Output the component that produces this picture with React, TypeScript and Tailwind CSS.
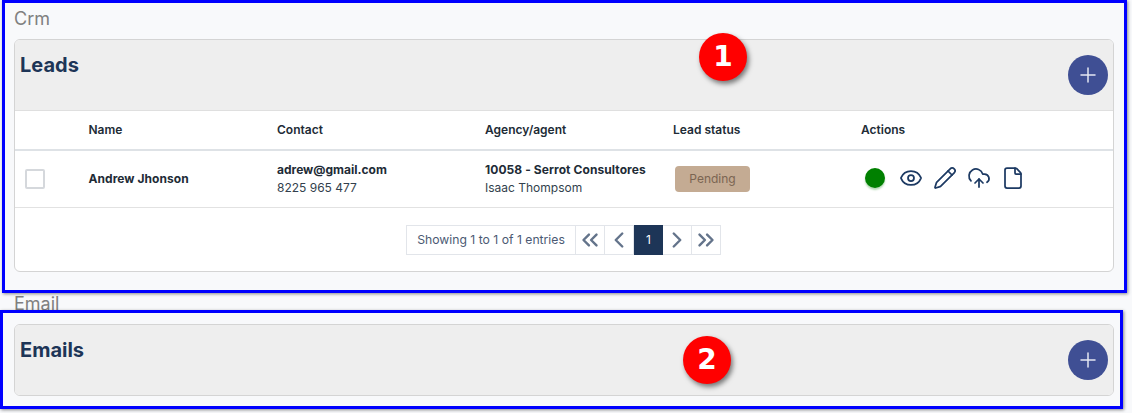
import { ChevronLeft, ChevronRight, ChevronsLeft, ChevronsRight, CloudUpload, Eye, File, Pencil, Plus } from 'lucide-react';

const rowGrid = 'grid grid-cols-[73.5px_188.5px_208px_188px_188px_1fr] items-center';

function CardHeading({ title }: { title: string }) {
  return (
    <div className="relative h-[70px] bg-[#eeeeee] pl-[5px] pt-[11px]">
      <h2 className="text-[20px] leading-[28px] font-bold text-[#1d3557]">{title}</h2>
      <button className="absolute right-[5px] top-[15px] flex h-10 w-10 items-center justify-center rounded-full bg-[#3f4f94] text-[#e5e7f2]">
        <Plus size={24} strokeWidth={1.5} />
      </button>
    </div>
  );
}

function PageButton({ children, active }: { children: React.ReactNode; active?: boolean }) {
  return (
    <div
      className={
        active
          ? 'flex h-[30px] w-[29px] items-center justify-center bg-[#1d3557] text-xs text-white'
          : 'flex h-[30px] w-[29px] items-center justify-center border border-l-0 border-[#e2e5ea] text-[#64748b]'
      }
    >
      {children}
    </div>
  );
}

function Marker({ n, className }: { n: number; className: string }) {
  return (
    <div
      className={`absolute flex h-12 w-12 items-center justify-center rounded-full bg-[#ff0000] font-['DejaVu_Sans',sans-serif] text-[28px] font-bold text-white shadow-[2px_3px_5px_rgba(0,0,0,0.5)] ${className}`}
    >
      {n}
    </div>
  );
}

export default function App() {
  return (
    <div className="relative h-[413px] w-[1132px] overflow-hidden bg-[#f8f9fb] font-['Inter',sans-serif]">
      <div className="px-[14px] pt-[8px]">
        <p className="text-[18px] leading-[22px] text-[#808080]">Crm</p>
        <section className="mt-[9px] w-[1100px] overflow-hidden rounded-md border border-[#d4d4d4] bg-white">
          <CardHeading title="Leads" />
          <div className={`${rowGrid} h-[41px] border-y border-b-2 border-t-[#dfdfdf] border-b-[#dee2e6] text-xs font-semibold text-[#212b36]`}>
            <span />
            <span>Name</span>
            <span>Contact</span>
            <span>Agency/agent</span>
            <span>Lead status</span>
            <span>Actions</span>
          </div>
          <div className={`${rowGrid} h-[57px] border-b border-[#e2e2e2] text-xs text-[#212b36]`}>
            <span className="ml-[10px] h-5 w-5 rounded-[2px] border-2 border-[#d5d8dc] bg-white" />
            <span className="font-bold tracking-[0.05px]">Andrew Jhonson</span>
            <div className="leading-[18px]">
              <p className="font-bold">adrew@gmail.com</p>
              <p className="text-[#333f4d]">8225 965 477</p>
            </div>
            <div className="leading-[18px]">
              <p className="font-bold tracking-[0.08px]">10058 - Serrot Consultores</p>
              <p className="text-[#333f4d]">Isaac Thompsom</p>
            </div>
            <span className="ml-[2px] flex h-[26px] w-[75px] items-center justify-center rounded bg-[#c4ab93] text-[#7b6552]">Pending</span>
            <div className="flex -translate-y-px items-center text-[#1d3a63]">
              <span className="ml-[4px] h-5 w-5 rounded-full bg-[#008000] shadow-[0_2px_2px_rgba(0,128,0,0.3)]" />
              <Eye size={24} strokeWidth={1.75} className="ml-[14px]" />
              <Pencil size={24} strokeWidth={1.75} className="ml-[10px]" />
              <CloudUpload size={24} strokeWidth={1.75} className="ml-[10px]" />
              <File size={24} strokeWidth={1.75} className="ml-[10px]" />
            </div>
          </div>
          <div className="flex h-[63px] items-start justify-center pt-[17px] pr-[1px]">
            <div className="flex h-[30px] w-[170px] items-center justify-center border border-[#e2e5ea] text-[12.2px] text-[#4b5a73]">
              Showing 1 to 1 of 1 entries
            </div>
            <PageButton><ChevronsLeft size={26} strokeWidth={2.25} /></PageButton>
            <PageButton><ChevronLeft size={26} strokeWidth={2.25} /></PageButton>
            <PageButton active>1</PageButton>
            <PageButton><ChevronRight size={26} strokeWidth={2.25} /></PageButton>
            <PageButton><ChevronsRight size={26} strokeWidth={2.25} /></PageButton>
          </div>
        </section>
        <p className="mt-[21px] text-[18px] leading-[22px] text-[#808080]">Email</p>
        <section className="mt-[9px] w-[1100px] overflow-hidden rounded-md border border-[#d4d4d4] bg-white">
          <CardHeading title="Emails" />
        </section>
      </div>

      {/* annotation overlays */}
      <div className="absolute left-[2px] top-0 h-[293px] w-[1125px] border-[3px] border-[#0000ff] shadow-[1px_1px_3px_rgba(0,0,0,0.45)]" />
      <div className="absolute left-0 top-[310px] h-[99px] w-[1123px] border-[3px] border-[#0000ff] shadow-[1px_1px_3px_rgba(0,0,0,0.45)]" />
      <Marker n={1} className="left-[699px] top-[33px]" />
      <Marker n={2} className="left-[683px] top-[336px]" />
    </div>
  );
}
